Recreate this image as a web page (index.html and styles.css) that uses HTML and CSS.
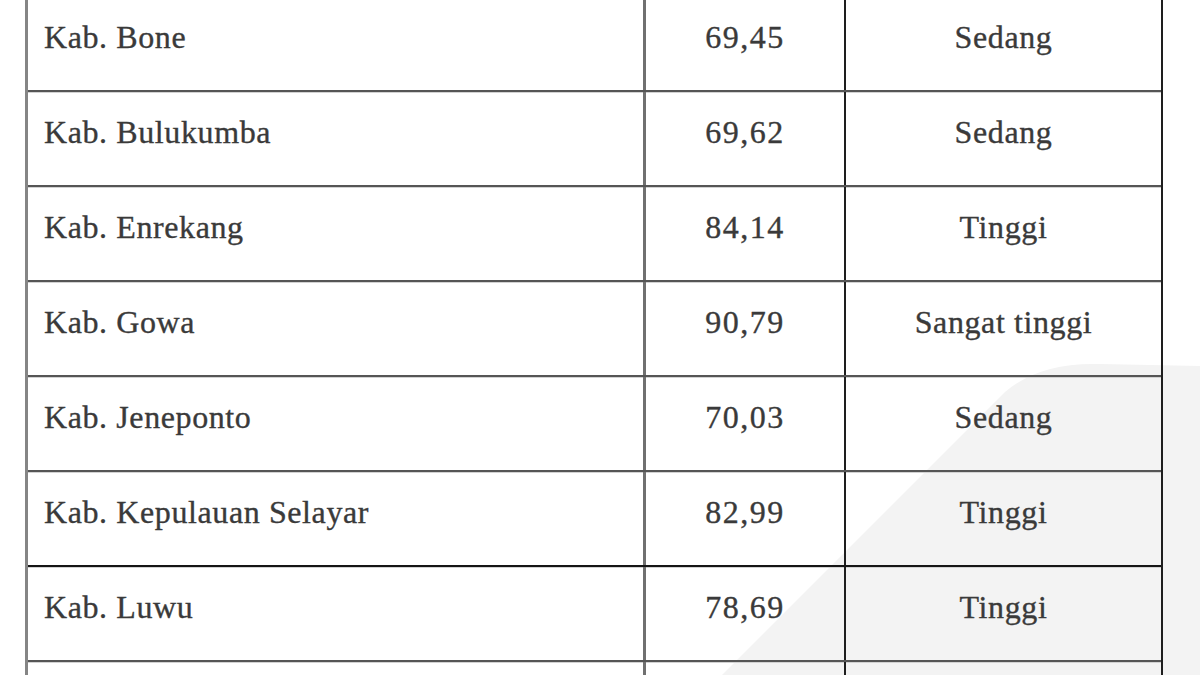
FILE: index.html
```html
<!DOCTYPE html>
<html lang="id">
<head>
<meta charset="utf-8">
<title>Tabel Kabupaten</title>
<link rel="stylesheet" href="styles.css">
</head>
<body>
<div class="page">
  <svg class="watermark" width="1200" height="675" viewBox="0 0 1200 675" aria-hidden="true">
    <path d="M722 675 L1005 392 Q1040 362 1100 364 L1200 366 L1200 675 Z" fill="#f3f3f3"/>
  </svg>
  <div class="table">
    <div class="row">
      <div class="cell name">Kab. Bone</div>
      <div class="cell num">69,45</div>
      <div class="cell cat">Sedang</div>
    </div>
    <div class="row">
      <div class="cell name">Kab. Bulukumba</div>
      <div class="cell num">69,62</div>
      <div class="cell cat">Sedang</div>
    </div>
    <div class="row">
      <div class="cell name">Kab. Enrekang</div>
      <div class="cell num">84,14</div>
      <div class="cell cat">Tinggi</div>
    </div>
    <div class="row">
      <div class="cell name">Kab. Gowa</div>
      <div class="cell num">90,79</div>
      <div class="cell cat">Sangat tinggi</div>
    </div>
    <div class="row">
      <div class="cell name">Kab. Jeneponto</div>
      <div class="cell num">70,03</div>
      <div class="cell cat">Sedang</div>
    </div>
    <div class="row row-dark">
      <div class="cell name">Kab. Kepulauan Selayar</div>
      <div class="cell num">82,99</div>
      <div class="cell cat">Tinggi</div>
    </div>
    <div class="row">
      <div class="cell name">Kab. Luwu</div>
      <div class="cell num">78,69</div>
      <div class="cell cat">Tinggi</div>
    </div>
    <div class="row">
      <div class="cell name"></div>
      <div class="cell num"></div>
      <div class="cell cat"></div>
    </div>
  </div>
</div>
</body>
</html>
```

FILE: styles.css
```css
html, body {
  margin: 0;
  padding: 0;
  background: #ffffff;
}

.page {
  position: relative;
  width: 1200px;
  height: 675px;
  overflow: hidden;
}

.watermark {
  position: absolute;
  left: 0;
  top: 0;
  z-index: 0;
}

.table {
  position: relative;
  z-index: 1;
  box-sizing: border-box;
  margin-left: 25px;
  margin-top: -3px;
  width: 1138px;
  border-left: 3px solid #858585;
  border-right: 2px solid #1e1e1e;
  display: flex;
  flex-direction: column;
}

.row {
  display: grid;
  grid-template-columns: 618px 200px 1fr;
  height: 95px;
  box-sizing: border-box;
  border-bottom: 2px solid #555555;
  box-shadow: 0 1px 0 #d2d2d2;
}

.row-dark {
  border-bottom-color: #151515;
}

.cell {
  box-sizing: border-box;
  padding-top: 20px;
  line-height: 40px;
  font-family: "Liberation Serif", "Times New Roman", serif;
  font-size: 32px;
  letter-spacing: 0.6px;
  color: #3a3a3a;
  -webkit-text-stroke: 0.35px #3a3a3a;
  white-space: nowrap;
}

.name {
  padding-left: 16px;
  border-right: 3px solid #707070;
}

.num {
  text-align: center;
  letter-spacing: 1.5px;
  border-right: 2px solid #1e1e1e;
}

.cat {
  text-align: center;
}
```
